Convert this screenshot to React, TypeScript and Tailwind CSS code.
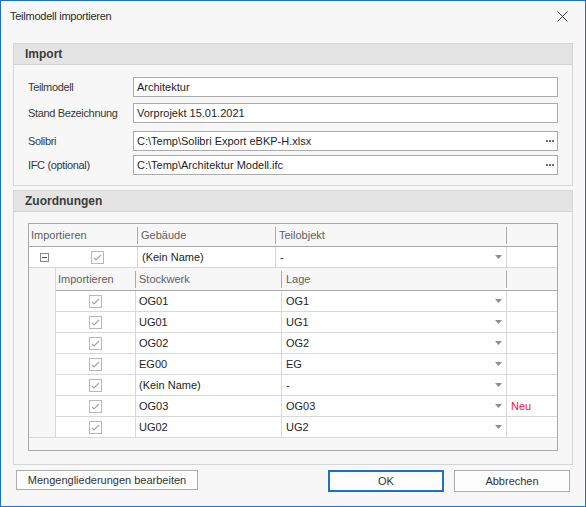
import React from "react";

const Sep = () => <div className="w-px h-[17px] bg-[#ababab] shrink-0" />;

const Check = () => (
  <div className="w-[13px] h-[13px] border border-[#b8b8b8] bg-white flex items-center justify-center shrink-0">
    <svg width="11" height="11" viewBox="0 0 11 11">
      <path d="M2 6 L4 8 L9 3" fill="none" stroke="#a3a3a3" strokeWidth="1.1" />
    </svg>
  </div>
);

const Arrow = () => (
  <svg width="7" height="4" viewBox="0 0 7 4" className="shrink-0">
    <path d="M0 0H7L3.5 4Z" fill="#8e8e8e" />
  </svg>
);

const Dots = () => (
  <div className="flex gap-[1px] shrink-0">
    <div className="w-[2px] h-[2px] bg-[#6e6e6e]" />
    <div className="w-[2px] h-[2px] bg-[#6e6e6e]" />
    <div className="w-[2px] h-[2px] bg-[#6e6e6e]" />
  </div>
);

const Field = ({ value, dots }: { value: string; dots?: boolean }) => (
  <div className="w-[425px] h-[20px] border border-[#ababab] bg-white flex items-center justify-between pl-[3px] pr-[3px] text-[#1e1e1e]">
    <span className="whitespace-nowrap">{value}</span>
    {dots && <Dots />}
  </div>
);

const rows = [
  { s: "OG01", l: "OG1", n: "" },
  { s: "UG01", l: "UG1", n: "" },
  { s: "OG02", l: "OG2", n: "" },
  { s: "EG00", l: "EG", n: "" },
  { s: "(Kein Name)", l: "-", n: "" },
  { s: "OG03", l: "OG03", n: "Neu" },
  { s: "UG02", l: "UG2", n: "" },
];

export default function App() {
  return (
    <div className="w-[586px] h-[507px] border border-[#2070c8] bg-[#f7f7f7] flex flex-col font-['Liberation_Sans',Arial,sans-serif] text-[11px] leading-none text-[#222]">
      {/* title bar */}
      <div className="h-[31px] shrink-0 flex items-center justify-between pl-[9px] pr-[17px]">
        <span className="text-[11px] tracking-[-0.25px] text-[#2a2a2a]">Teilmodell importieren</span>
        <svg width="11" height="11" viewBox="0 0 11 11">
          <path d="M0.5 0.5 L10.5 10.5 M10.5 0.5 L0.5 10.5" stroke="#3a3a3a" strokeWidth="1" />
        </svg>
      </div>

      {/* Import group */}
      <div className="mt-[11px] ml-[12px] w-[560px] border border-[#d6d6d6] shrink-0">
        <div className="h-[21px] bg-[#e4e4e4] border-b border-[#d3d3d3] flex items-center pl-[11px] font-bold text-[12px] text-[#3c3c3c]">
          Import
        </div>
        <div className="pt-[12px] pb-[10px] pl-[14px] flex flex-col">
          <div className="flex items-center">
            <span className="w-[105px] tracking-[-0.35px] text-[#383838]">Teilmodell</span>
            <Field value="Architektur" />
          </div>
          <div className="flex items-center mt-[6px]">
            <span className="w-[105px] tracking-[-0.35px] text-[#383838]">Stand Bezeichnung</span>
            <Field value="Vorprojekt 15.01.2021" />
          </div>
          <div className="flex items-center mt-[8px]">
            <span className="w-[105px] tracking-[-0.35px] text-[#383838]">Solibri</span>
            <Field value="C:\Temp\Solibri Export eBKP-H.xlsx" dots />
          </div>
          <div className="flex items-center mt-[4px]">
            <span className="w-[105px] tracking-[-0.35px] text-[#383838]">IFC (optional)</span>
            <Field value="C:\Temp\Architektur Modell.ifc" dots />
          </div>
        </div>
      </div>

      {/* Zuordnungen group */}
      <div className="mt-[4px] ml-[12px] w-[560px] border border-[#d6d6d6] shrink-0">
        <div className="h-[21px] bg-[#e4e4e4] border-b border-[#d3d3d3] flex items-center pl-[11px] font-bold text-[12px] text-[#3c3c3c]">
          Zuordnungen
        </div>
        <div className="pt-[11px] pb-[13px] pl-[14px]">
          <div className="w-[530px] h-[228px] border border-[#a9a9a9] flex flex-col">
            {/* master header */}
            <div className="flex h-[23px] border-b border-[#a9a9a9] text-[#5e5e5e]">
              <div className="w-[109px] flex items-center justify-between pl-[2px]">
                <span>Importieren</span>
                <Sep />
              </div>
              <div className="w-[138px] flex items-center justify-between pl-[3px]">
                <span>Gebäude</span>
                <Sep />
              </div>
              <div className="w-[231px] flex items-center justify-between pl-[3px]">
                <span>Teilobjekt</span>
                <Sep />
              </div>
              <div className="w-[50px]" />
            </div>
            {/* master row */}
            <div className="flex h-[21px] border-b border-[#d8d8d8] bg-white text-[#1e1e1e]">
              <div className="w-[109px] border-r border-[#d8d8d8] flex items-center">
                <div className="ml-[11px] w-[9px] h-[9px] border border-[#8a8a8a] flex items-center justify-center">
                  <div className="w-[5px] h-px bg-[#505050]" />
                </div>
                <div className="ml-[42px]">
                  <Check />
                </div>
              </div>
              <div className="w-[138px] border-r border-[#d8d8d8] flex items-center pl-[4px]">
                (Kein Name)
              </div>
              <div className="w-[231px] border-r border-[#d8d8d8] flex items-center justify-between pl-[4px] pr-[4px]">
                <span>-</span>
                <Arrow />
              </div>
              <div className="w-[50px]" />
            </div>
            {/* detail */}
            <div className="flex">
              <div className="w-[26px]" />
              <div className="w-[502px] border-l border-[#d8d8d8]">
                <div className="flex h-[23px] border-b border-[#a9a9a9] text-[#5e5e5e]">
                  <div className="w-[80px] flex items-center justify-between pl-[2px]">
                    <span>Importieren</span>
                    <Sep />
                  </div>
                  <div className="w-[146px] flex items-center justify-between pl-[3px]">
                    <span>Stockwerk</span>
                    <Sep />
                  </div>
                  <div className="w-[225px] flex items-center justify-between pl-[4px]">
                    <span>Lage</span>
                    <Sep />
                  </div>
                  <div className="w-[50px]" />
                </div>
                {rows.map((r, i) => (
                  <div
                    key={i}
                    className={
                      i < rows.length - 1
                        ? "flex h-[21px] border-b border-[#d8d8d8] bg-white text-[#1e1e1e]"
                        : "flex h-[20px] bg-white text-[#1e1e1e]"
                    }
                  >
                    <div className="w-[80px] border-r border-[#d8d8d8] flex items-center justify-center">
                      <Check />
                    </div>
                    <div className="w-[146px] border-r border-[#d8d8d8] flex items-center pl-[3px]">
                      {r.s}
                    </div>
                    <div className="w-[225px] border-r border-[#d8d8d8] flex items-center justify-between pl-[4px] pr-[4px]">
                      <span>{r.l}</span>
                      <Arrow />
                    </div>
                    <div className="w-[50px] flex items-center pl-[4px] text-[#e8173f]">{r.n}</div>
                  </div>
                ))}
              </div>
            </div>
            <div className="h-[13px] border-t border-[#d8d8d8]" />
          </div>
        </div>
      </div>

      {/* buttons */}
      <div className="mt-[5px] flex items-start pl-[15px] pr-[15px]">
        <button className="w-[182px] h-[20px] border border-[#adadad] bg-[#fdfdfd] text-[#333] flex items-center justify-center">
          Mengengliederungen bearbeiten
        </button>
        <div className="ml-auto flex gap-[10px]">
          <button className="w-[116px] h-[22px] border-2 border-[#1f6fc4] bg-[#fdfdfd] text-[#333] flex items-center justify-center">
            OK
          </button>
          <button className="w-[116px] h-[22px] border border-[#adadad] bg-[#fdfdfd] text-[#333] flex items-center justify-center">
            Abbrechen
          </button>
        </div>
      </div>
    </div>
  );
}
